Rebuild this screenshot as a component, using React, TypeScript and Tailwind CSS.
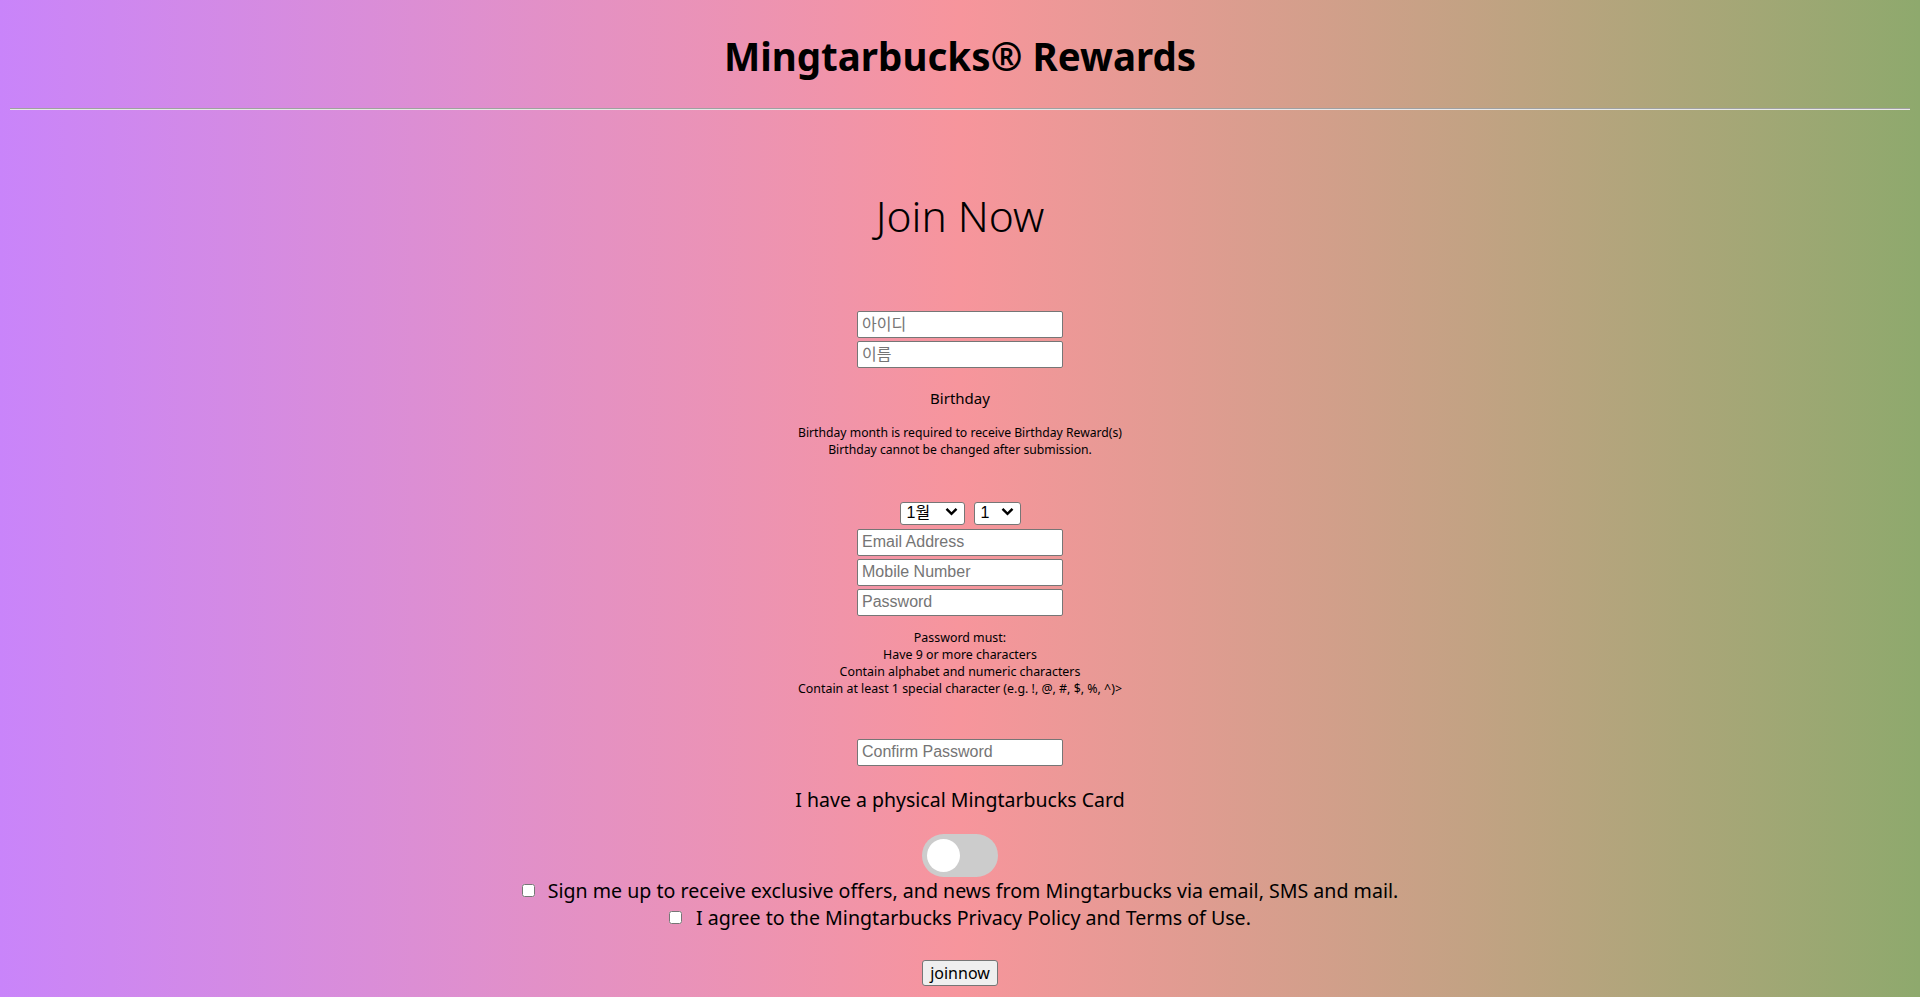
import React from "react";

const pageFont = { fontFamily: '"Noto Sans", "Noto Sans CJK KR", sans-serif' };

const Field = ({ placeholder, type = "text" }: { placeholder: string; type?: string }) => (
  <input
    type={type}
    placeholder={placeholder}
    className="w-[206px] h-[27px] bg-white border border-[#767676] rounded-[2px] px-[4px] text-[16px] text-black placeholder:text-[#757575] font-['Liberation_Sans','Noto_Sans_CJK_KR',sans-serif] outline-none"
  />
);

const Chevron = () => (
  <svg width="13" height="9" viewBox="0 0 13 9" className="pointer-events-none absolute right-[7px] top-[7px]">
    <path d="M1.5 1.8 L6.5 6.8 L11.5 1.8" fill="none" stroke="#000" strokeWidth="2.4" />
  </svg>
);

const Select = ({ width, options }: { width: string; options: string[] }) => (
  <div className={`relative ${width}`}>
    <select className="appearance-none w-full h-[23px] bg-white border border-[#767676] rounded-[3px] pl-[6px] text-[16px] leading-[20px] text-black font-['Liberation_Sans','Noto_Sans_CJK_KR',sans-serif]">
      {options.map((o) => (
        <option key={o}>{o}</option>
      ))}
    </select>
    <Chevron />
  </div>
);

const months = Array.from({ length: 12 }, (_, i) => `${i + 1}월`);
const days = Array.from({ length: 31 }, (_, i) => `${i + 1}`);

export default function App() {
  return (
    <div
      className="min-h-screen w-full bg-gradient-to-r from-[#c984fa] via-[#f7959c] to-[#8ea96d] text-black overflow-hidden"
      style={pageFont}
    >
      {/* header */}
      <h1 className="mt-[32px] text-center text-[38.5px] leading-[48px] font-bold">Mingtarbucks® Rewards</h1>
      <div className="mt-[28px] mx-[10px] border-t border-t-[#a0a0a0] border-b border-b-[#e8e8e8]" />

      <div className="flex flex-col items-center">
        <h2 className="mt-[78px] text-[42.5px] leading-[56px] font-light">Join Now</h2>

        <div className="mt-[67px] flex flex-col gap-[3px]">
          <Field placeholder="아이디" />
          <Field placeholder="이름" />
        </div>

        <p className="mt-[18px] text-[15px] leading-[24px]">Birthday</p>
        <div className="mt-[14px] text-[12.2px] leading-[17px] text-center">
          <p>Birthday month is required to receive Birthday Reward(s)</p>
          <p>Birthday cannot be changed after submission.</p>
        </div>

        <div className="mt-[42px] flex gap-[9px]">
          <Select width="w-[65px]" options={months} />
          <Select width="w-[47px]" options={days} />
        </div>

        <div className="mt-[4px] flex flex-col gap-[3px]">
          <Field placeholder="Email Address" type="email" />
          <Field placeholder="Mobile Number" />
          <Field placeholder="Password" type="password" />
        </div>

        <div className="mt-[13px] text-[12.4px] leading-[17px] text-center">
          <p>Password must:</p>
          <p>Have 9 or more characters</p>
          <p>Contain alphabet and numeric characters</p>
          <p>Contain at least 1 special character (e.g. !, @, #, $, %, ^)&gt;</p>
        </div>

        <div className="mt-[42px]">
          <Field placeholder="Confirm Password" type="password" />
        </div>

        <p className="mt-[22px] text-[19.5px] leading-[24px]">I have a physical Mingtarbucks Card</p>

        <div className="mt-[22px] w-[76px] h-[43px] rounded-full bg-[#cccccc] flex items-center pl-[5px]">
          <div className="w-[33px] h-[33px] rounded-full bg-white" />
        </div>

        <div className="mt-[0px] flex flex-col items-center text-[19.6px] leading-[27px]">
          <label className="flex items-center gap-[13px]">
            <input type="checkbox" className="w-[13px] h-[13px]" />
            <span>Sign me up to receive exclusive offers, and news from Mingtarbucks via email, SMS and mail.</span>
          </label>
          <label className="flex items-center gap-[14px]">
            <input type="checkbox" className="w-[13px] h-[13px]" />
            <span>I agree to the Mingtarbucks Privacy Policy and Terms of Use.</span>
          </label>
        </div>

        <button className="mt-[29px] w-[76px] h-[26px] bg-[#efefef] border border-[#767676] rounded-[3px] text-[16px] leading-[20px]">
          joinnow
        </button>
      </div>
    </div>
  );
}
